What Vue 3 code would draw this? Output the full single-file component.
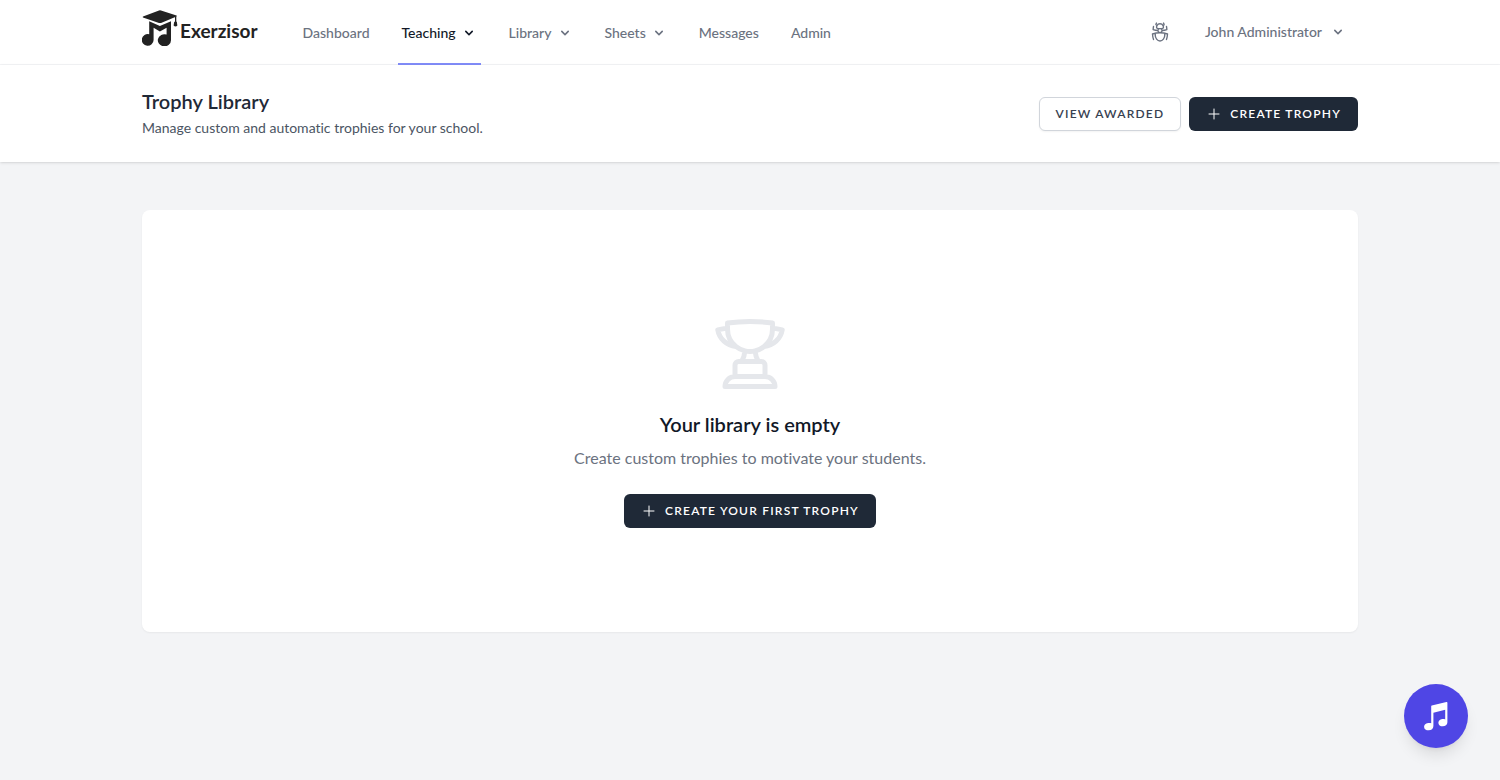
<template>
  <div class="app-layout">
    <nav class="navbar">
      <div class="container navbar-inner">
        <a href="#" class="logo" aria-label="Exerzisor">
          <svg class="logo-mark" viewBox="0 0 36 36" fill="#222" aria-hidden="true">
            <path d="M1 6.5 17 0.4Q18 0 19 0.4L34.5 5.6Q35.3 6 34.5 6.5L19 12.9Q18 13.3 17 12.9L1 7.5Q0.4 7 1 6.5Z" />
            <path d="M33 6.5h1.3v6.2h-1.3z" />
            <path d="M32.2 11.8h2.6l.6 3.8q-1.9 1.7-3.8 0z" />
            <path d="M7.2 11.2 17.9 16 29 11.2V30.2A6.6 6.1 0 1 1 24.6 24.5V17.8L17.9 21.5 11.6 17.8V30A5.9 5.9 0 1 1 7.2 24.2Z" />
          </svg>
          <span class="logo-text">Exerzisor</span>
        </a>
        <div class="nav-links">
          <a
            v-for="item in navItems"
            :key="item.label"
            href="#"
            class="nav-link"
            :class="{ active: item.active }"
          >
            {{ item.label }}
            <svg v-if="item.dropdown" class="chevron" viewBox="0 0 20 20" fill="currentColor" aria-hidden="true">
              <path fill-rule="evenodd" :d="chevronPath" clip-rule="evenodd" />
            </svg>
          </a>
        </div>
        <div class="nav-right">
          <button type="button" class="icon-button" aria-label="Report a bug">
            <svg class="bug-icon" viewBox="0 0 24 24" fill="none" stroke="currentColor" stroke-width="1.5" stroke-linecap="round" stroke-linejoin="round">
              <path d="M12 12.75c1.148 0 2.278.08 3.383.237 1.037.146 1.866.966 1.866 2.013 0 3.728-2.35 6.75-5.25 6.75S6.75 18.728 6.75 15c0-1.046.83-1.867 1.866-2.013A24.204 24.204 0 0 1 12 12.75Zm0 0c2.883 0 5.647.508 8.207 1.44a23.91 23.91 0 0 1-1.152 6.06M12 12.75c-2.883 0-5.647.508-8.208 1.44.125 2.104.52 4.136 1.153 6.06M12 12.75a2.25 2.25 0 0 0 2.248-2.354M12 12.75a2.25 2.25 0 0 1-2.248-2.354M12 8.25c.995 0 1.971-.08 2.922-.236.403-.066.74-.358.795-.762a3.778 3.778 0 0 0-.399-2.25M12 8.25c-.995 0-1.97-.08-2.922-.236-.402-.066-.74-.358-.795-.762a3.734 3.734 0 0 1 .4-2.253M12 8.25a2.25 2.25 0 0 0-2.248 2.146M12 8.25a2.25 2.25 0 0 1 2.248 2.146M8.683 5a6.032 6.032 0 0 1-1.155-1.002c.07-.63.27-1.222.574-1.747m.581 2.749A3.75 3.75 0 0 1 15.318 5m0 0c.427-.283.815-.62 1.155-.999a4.471 4.471 0 0 0-.575-1.752M4.921 6a24.048 24.048 0 0 0-.392 3.314c1.668.546 3.416.914 5.223 1.082M19.08 6c.205 1.08.337 2.187.392 3.314a23.882 23.882 0 0 1-5.223 1.082" />
            </svg>
          </button>
          <button type="button" class="user-button">
            John Administrator
            <svg class="chevron" viewBox="0 0 20 20" fill="currentColor" aria-hidden="true">
              <path fill-rule="evenodd" :d="chevronPath" clip-rule="evenodd" />
            </svg>
          </button>
        </div>
      </div>
    </nav>

    <header class="page-header">
      <div class="container header-inner">
        <div>
          <h1 class="page-title">Trophy Library</h1>
          <p class="page-desc">Manage custom and automatic trophies for your school.</p>
        </div>
        <div class="header-actions">
          <button type="button" class="btn btn-secondary">View awarded</button>
          <button type="button" class="btn btn-primary">
            <svg class="plus-icon" viewBox="0 0 24 24" fill="none" stroke="currentColor" stroke-width="1.5" stroke-linecap="round" aria-hidden="true">
              <path d="M12 4.5v15m7.5-7.5h-15" />
            </svg>
            Create trophy
          </button>
        </div>
      </div>
    </header>

    <main class="container page-main">
      <section class="empty-card">
        <svg class="trophy-icon" viewBox="0 0 24 24" fill="none" stroke="currentColor" stroke-width="1.5" stroke-linecap="round" stroke-linejoin="round" aria-hidden="true">
          <path d="M16.5 18.75h-9m9 0a3 3 0 0 1 3 3h-15a3 3 0 0 1 3-3m9 0v-3.375c0-.621-.503-1.125-1.125-1.125h-.871M7.5 18.75v-3.375c0-.621.504-1.125 1.125-1.125h.872m5.007 0H9.497m5.007 0a7.454 7.454 0 0 1-.982-3.172M9.497 14.25a7.454 7.454 0 0 0 .981-3.172M5.25 4.236c-.982.143-1.954.317-2.916.52A6.003 6.003 0 0 0 7.73 9.728M5.25 4.236V4.5c0 2.108.966 3.99 2.48 5.228M5.25 4.236V2.721C7.456 2.41 9.71 2.25 12 2.25c2.291 0 4.545.16 6.75.47v1.516M7.73 9.728a6.726 6.726 0 0 0 2.748 1.35m8.272-6.842V4.5c0 2.108-.966 3.99-2.48 5.228m2.48-5.492a46.32 46.32 0 0 1 2.916.52 6.003 6.003 0 0 1-5.395 4.972m0 0a6.726 6.726 0 0 1-2.749 1.35m0 0a6.772 6.772 0 0 1-3.044 0" />
        </svg>
        <h2 class="empty-title">Your library is empty</h2>
        <p class="empty-desc">Create custom trophies to motivate your students.</p>
        <button type="button" class="btn btn-primary">
          <svg class="plus-icon" viewBox="0 0 24 24" fill="none" stroke="currentColor" stroke-width="1.5" stroke-linecap="round" aria-hidden="true">
            <path d="M12 4.5v15m7.5-7.5h-15" />
          </svg>
          Create your first trophy
        </button>
      </section>
    </main>

    <button type="button" class="fab" aria-label="Music tools">
      <svg class="fab-icon" viewBox="0 0 32 32" fill="currentColor" aria-hidden="true">
        <path d="M11.2 6.2Q11.2 5.6 11.8 5.4L26.4 2Q27.4 1.8 27.4 2.8V22.2C27.4 24.6 25.2 26.3 22.8 26.3C20.2 26.3 18.4 24.8 18.4 22.9C18.4 20.4 20.8 19 23.2 19C23.9 19 24.6 19.1 25.2 19.4V9.8L13.4 12.8V25.9C13.4 28.6 11.4 30.3 8.7 30.3C6.1 30.3 4.1 29 4.1 26.9C4.1 24.4 6.5 23 9.1 23C9.9 23 10.6 23.1 11.2 23.3Z" />
      </svg>
    </button>
  </div>
</template>

<script setup>
const chevronPath = 'M5.293 7.293a1 1 0 011.414 0L10 10.586l3.293-3.293a1 1 0 111.414 1.414l-4 4a1 1 0 01-1.414 0l-4-4a1 1 0 010-1.414z'

const navItems = [
  { label: 'Dashboard' },
  { label: 'Teaching', dropdown: true, active: true },
  { label: 'Library', dropdown: true },
  { label: 'Sheets', dropdown: true },
  { label: 'Messages' },
  { label: 'Admin' }
]
</script>

<style>
body {
  margin: 0;
  background: #f3f4f6;
}
</style>

<style scoped>
.app-layout {
  min-height: 100vh;
  font-family: Lato, "Liberation Sans", sans-serif;
  font-variant-ligatures: none;
  color: #111827;
  background: #f3f4f6;
}
.app-layout * {
  box-sizing: border-box;
}
.container {
  max-width: 1280px;
  margin: 0 auto;
  padding: 0 32px;
}
button {
  font-family: inherit;
  cursor: pointer;
}
h1,
h2,
p {
  margin: 0;
}
svg {
  display: block;
  flex-shrink: 0;
}
.navbar {
  background: #fff;
  border-bottom: 1px solid #f3f4f6;
}
.navbar-inner {
  display: flex;
  height: 64px;
}
.logo {
  display: flex;
  align-items: center;
  gap: 2px;
  padding-bottom: 8px;
  color: #222;
  text-decoration: none;
}
.logo-mark {
  width: 36px;
  height: 36px;
}
.logo-text {
  padding-top: 6px;
  font-size: 19px;
  font-weight: 700;
  line-height: 24px;
}
.nav-links {
  display: flex;
  gap: 24px;
  margin-left: 41px;
}
.nav-link {
  display: flex;
  align-items: center;
  gap: 5px;
  height: 65px;
  padding: 2px 4px 0;
  border-bottom: 2px solid transparent;
  font-size: 14px;
  font-weight: 500;
  line-height: 20px;
  color: #6b7280;
  text-decoration: none;
}
.nav-link.active {
  color: #111827;
  border-bottom-color: #818cf8;
}
.chevron {
  width: 16px;
  height: 16px;
}
.nav-right {
  display: flex;
  align-items: center;
  gap: 22px;
  margin-left: auto;
}
.icon-button {
  padding: 0;
  border: 0;
  background: none;
  color: #6b7280;
}
.bug-icon {
  width: 22px;
  height: 22px;
}
.user-button {
  display: flex;
  align-items: center;
  gap: 8px;
  padding: 8px 12px;
  border: 0;
  background: #fff;
  font-size: 14px;
  font-weight: 500;
  line-height: 16px;
  color: #6b7280;
}
.page-header {
  position: relative;
  background: #fff;
  box-shadow: 0 1px 3px 0 rgba(0, 0, 0, 0.1), 0 1px 2px -1px rgba(0, 0, 0, 0.1);
}
.header-inner {
  display: flex;
  align-items: center;
  justify-content: space-between;
  padding-top: 24px;
  padding-bottom: 24px;
}
.page-title {
  font-size: 20px;
  font-weight: 600;
  line-height: 25px;
  color: #1f2937;
}
.page-desc {
  margin-top: 4px;
  font-size: 14px;
  line-height: 20px;
  color: #4b5563;
}
.header-actions {
  display: flex;
  gap: 8px;
}
.btn {
  display: inline-flex;
  align-items: center;
  gap: 8px;
  padding: 8px 16px;
  border: 1px solid transparent;
  border-radius: 6px;
  font-size: 12px;
  font-weight: 600;
  line-height: 16px;
  letter-spacing: 0.1em;
  text-transform: uppercase;
}
.btn-primary {
  background: #1f2937;
  color: #fff;
}
.btn-secondary {
  border-color: #d1d5db;
  background: #fff;
  color: #374151;
  box-shadow: 0 1px 2px 0 rgba(0, 0, 0, 0.05);
}
.plus-icon {
  width: 16px;
  height: 16px;
}
.page-main {
  padding-top: 48px;
  padding-bottom: 48px;
}
.empty-card {
  display: flex;
  flex-direction: column;
  align-items: center;
  padding: 104px 24px;
  border-radius: 8px;
  background: #fff;
  box-shadow: 0 1px 2px 0 rgba(0, 0, 0, 0.05);
}
.trophy-icon {
  width: 80px;
  height: 80px;
  color: #e5e7eb;
}
.empty-title {
  margin-top: 16px;
  font-size: 20px;
  font-weight: 600;
  line-height: 28px;
}
.empty-desc {
  margin: 8px 0 24px;
  font-size: 16px;
  line-height: 24px;
  color: #6b7280;
}
.fab {
  position: fixed;
  right: 32px;
  bottom: 32px;
  display: flex;
  align-items: center;
  justify-content: center;
  width: 64px;
  height: 64px;
  padding: 0;
  border: 0;
  border-radius: 50%;
  background: #4f46e5;
  color: #fff;
  box-shadow: 0 10px 15px -3px rgba(0, 0, 0, 0.1), 0 4px 6px -4px rgba(0, 0, 0, 0.1);
}
.fab-icon {
  width: 32px;
  height: 32px;
}
</style>
